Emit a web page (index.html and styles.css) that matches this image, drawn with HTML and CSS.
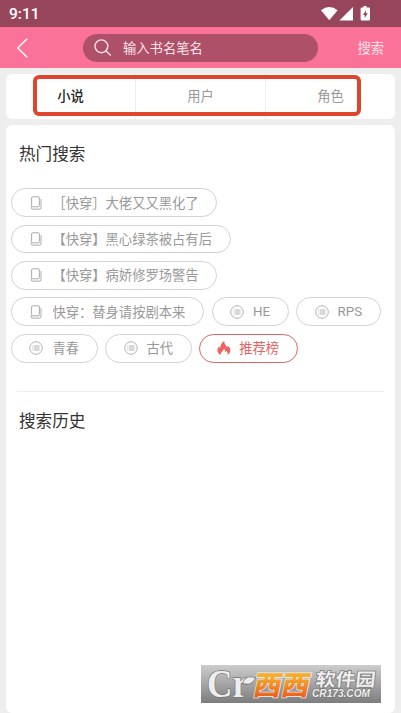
FILE: index.html
```
<!DOCTYPE html>
<html lang="zh-CN">
<head>
    <meta charset="UTF-8">
    <meta name="viewport" content="width=device-width, initial-scale=1.0">
    <title>搜索</title>
    <link rel="stylesheet" href="styles.css">
</head>
<body>
    <svg class="defs" width="0" height="0">
        <symbol id="book" viewBox="0 0 12 14">
            <rect x="1.6" y=".8" width="7.8" height="10" rx="1.2" fill="none" stroke="#aaa"/>
            <path d="M1.2 10v1.6q0 1.5 1.5 1.5h7q1.3 0 1.3-1.5V3" fill="none" stroke="#bbb" stroke-width="1.2"/>
        </symbol>
        <symbol id="list" viewBox="0 0 14 14">
            <circle cx="7" cy="7" r="6.3" fill="none" stroke="#aaa" stroke-width=".9"/>
            <path d="M3.4 5h.9M5 5h5.6M3.4 7h.9M5 7h5.6M3.4 9h.9M5 9h5.6" stroke="#aaa" stroke-width=".9"/>
        </symbol>
    </svg>

    <div class="status">
        <span class="time">9:11</span>
        <svg class="status-icons" width="52" height="16" viewBox="0 0 52 16">
            <path d="M0 4.3Q8.3-2.5 16.6 4.3L8.3 14.3Z" fill="#fff"/>
            <path d="M32 1v13.4H18.4Z" fill="#fff"/>
            <path d="M42.5 0h3v1.6h2.3q1.2 0 1.2 1.2v10.5q0 1.2-1.2 1.2h-7q-1.2 0-1.2-1.2V2.8q0-1.2 1.2-1.2h1.7Z" fill="#fff"/>
            <path d="M45 4.2v3h1.8L43.7 12V9h-1.8Z" fill="#96455b"/>
        </svg>
    </div>

    <div class="header">
        <svg class="back" width="12" height="20" viewBox="0 0 12 20">
            <path d="M11.2 .7L1.7 10l9.5 9.3" fill="none" stroke="#fff" stroke-width="1.4"/>
        </svg>
        <div class="search-box">
            <svg width="18" height="18" viewBox="0 0 18 18">
                <circle cx="7.4" cy="7.3" r="6.4" fill="none" stroke="#fbe3e9" stroke-width="1.4"/>
                <path d="M12 12l4.8 4.6" stroke="#fbe3e9" stroke-width="1.4"/>
            </svg>
            <span>输入书名笔名</span>
        </div>
        <span class="search-btn">搜索</span>
    </div>

    <div class="tabs">
        <div class="tab active">小说</div>
        <div class="tab">用户</div>
        <div class="tab">角色</div>
        <div class="highlight"></div>
    </div>

    <div class="panel">
        <h2>热门搜索</h2>
        <div class="tags">
            <div class="tag"><svg class="book"><use href="#book"/></svg><span>［快穿］大佬又又黑化了</span></div>
            <div class="tag"><svg class="book"><use href="#book"/></svg><span>【快穿】黑心绿茶被占有后</span></div>
            <div class="tag"><svg class="book"><use href="#book"/></svg><span>【快穿】病娇修罗场警告</span></div>
            <div class="tag"><svg class="book"><use href="#book"/></svg><span>快穿：替身请按剧本来</span></div>
            <div class="tag"><svg><use href="#list"/></svg><span>HE</span></div>
            <div class="tag"><svg><use href="#list"/></svg><span>RPS</span></div>
            <div class="tag"><svg><use href="#list"/></svg><span>青春</span></div>
            <div class="tag"><svg><use href="#list"/></svg><span>古代</span></div>
            <div class="tag hot">
                <svg viewBox="0 0 14 14"><path d="M3.5 14Q.3 12 .4 8.8Q.6 6.8 2 5.2Q2.2 6.8 3 7.2Q3.4 2.4 7.3 0Q6.9 2.5 8.7 4.2Q10 5.4 10.2 6.4Q10.9 5.6 10.7 4.4Q13.5 6.7 13.5 9.5Q13.4 12.4 10.4 14Q11.2 11.2 9.4 9.8Q8.9 11 8.2 11Q8.6 9 7 7.8Q6.6 9.6 5.2 10.4Q3.6 11.6 3.5 14Z" fill="#ee6363"/></svg><span>推荐榜</span>
            </div>
        </div>
        <h2 class="history">搜索历史</h2>
    </div>

    <svg class="watermark" width="180" height="38" viewBox="0 0 180 38">
        <defs>
            <linearGradient id="bar" x1="0" y1="0" x2="0" y2="1">
                <stop offset="0" stop-color="#cdcdcd"/>
                <stop offset="1" stop-color="#7d7d7d"/>
            </linearGradient>
            <linearGradient id="orange" x1="0" y1="0" x2="0" y2="1">
                <stop offset="0.2" stop-color="#f6ad2c"/>
                <stop offset="1" stop-color="#e8501c"/>
            </linearGradient>
        </defs>
        <rect width="180" height="38" fill="url(#bar)"/>
        <g class="outlined">
            <text class="cr" x="6" y="32" textLength="41" lengthAdjust="spacingAndGlyphs">Cr</text>
            <path d="M42 18Q45 10 54 13Q50 21 42 18Z"/>
            <text class="xixi" transform="translate(51 30) skewX(-12)" textLength="56" lengthAdjust="spacingAndGlyphs">西西</text>
            <text class="soft" transform="translate(114 20.5) skewX(-6)" textLength="60" lengthAdjust="spacingAndGlyphs">软件园</text>
            <text class="url" transform="translate(111 31.5)" textLength="58" lengthAdjust="spacingAndGlyphs">CR173.COM</text>
        </g>
    </svg>
</body>
</html>
```
FILE: styles.css
```
* {
    box-sizing: border-box;
}
body {
    margin: 0;
    height: 713px;
    display: flex;
    flex-direction: column;
    overflow: hidden;
    background-color: #eee;
    font-family: Roboto, "Noto Sans CJK SC", sans-serif;
    font-size: 13.3px;
    color: #999;
}
.defs {
    position: absolute;
}
.status {
    height: 27px;
    flex: none;
    display: flex;
    justify-content: space-between;
    padding: 6px 28px 0 9px;
    background-color: #96455b;
    color: #fff;
}
.time {
    font-size: 15.5px;
    font-weight: 500;
    line-height: 17px;
}
.header {
    height: 41px;
    flex: none;
    display: flex;
    align-items: center;
    padding: 0 17px 0 16px;
    background-color: #fb7299;
}
.search-box {
    width: 235px;
    height: 28px;
    margin-left: 55px;
    padding-left: 11px;
    display: flex;
    align-items: center;
    border-radius: 14px;
    background-color: #af5069;
    color: #fbe3e9;
}
.search-box span {
    margin-left: 11px;
}
.search-btn {
    margin-left: auto;
    color: #ffe3ea;
}
.tabs {
    position: relative;
    height: 45px;
    flex: none;
    display: flex;
    align-items: center;
    margin: 6px 6px 0;
    border-radius: 6px;
    background-color: #fff;
}
.tab {
    flex: 1;
    line-height: 46px;
    text-align: center;
}
.tab + .tab {
    border-left: 1px solid #eee;
}
.tab.active {
    color: #222;
    font-weight: 500;
}
/* frame drawn around the three tabs */
.highlight {
    position: absolute;
    left: 27px;
    top: 1px;
    width: 328px;
    height: 41px;
    border: 4px solid #df452e;
    border-radius: 6px;
}
.panel {
    flex: 1;
    margin: 6px 6px 0;
    padding: 18px 5px 0;
    border-radius: 6px;
    background-color: #fff;
}
h2 {
    margin: 0 0 0 8px;
    font-size: 16.6px;
    font-weight: 400;
    line-height: 24px;
    color: #333;
}
.tags {
    display: flex;
    flex-wrap: wrap;
    gap: 7.6px;
    margin-top: 21.3px;
}
.tag {
    height: 28.8px;
    display: flex;
    align-items: center;
    padding: 0 17.6px 0 17.4px;
    border: 1px solid #d3d3d3;
    border-radius: 15px;
    white-space: nowrap;
}
.tag span {
    padding-bottom: 1.4px;
}
.tag svg {
    width: 14px;
    height: 14px;
    margin-right: 9px;
}
.tag .book {
    width: 12px;
    margin: 0 10px 0 1px;
}
.tag.hot {
    padding: 0 17.8px 0 16.8px;
    border-color: #e26464;
    color: #e26464;
}
.tag.hot svg {
    margin-right: 8px;
}
.history {
    margin: 28px 6px 0;
    padding: 18px 2px 0;
    border-top: 1px solid #eee;
}
.watermark {
    position: absolute;
    left: 201px;
    top: 665px;
    overflow: visible;
}
.outlined {
    fill: #eee;
    stroke: #777;
    stroke-width: 1.4;
    paint-order: stroke;
    font-family: "Liberation Sans", "Noto Sans CJK SC", sans-serif;
    font-weight: 700;
}
.cr {
    font-family: "Liberation Serif", serif;
    font-size: 40px;
}
.xixi {
    font-size: 27px;
    font-weight: 900;
    fill: url(#orange);
    stroke: #eee;
}
.soft {
    font-size: 18px;
}
.url {
    font-size: 10px;
    font-style: italic;
}
```
